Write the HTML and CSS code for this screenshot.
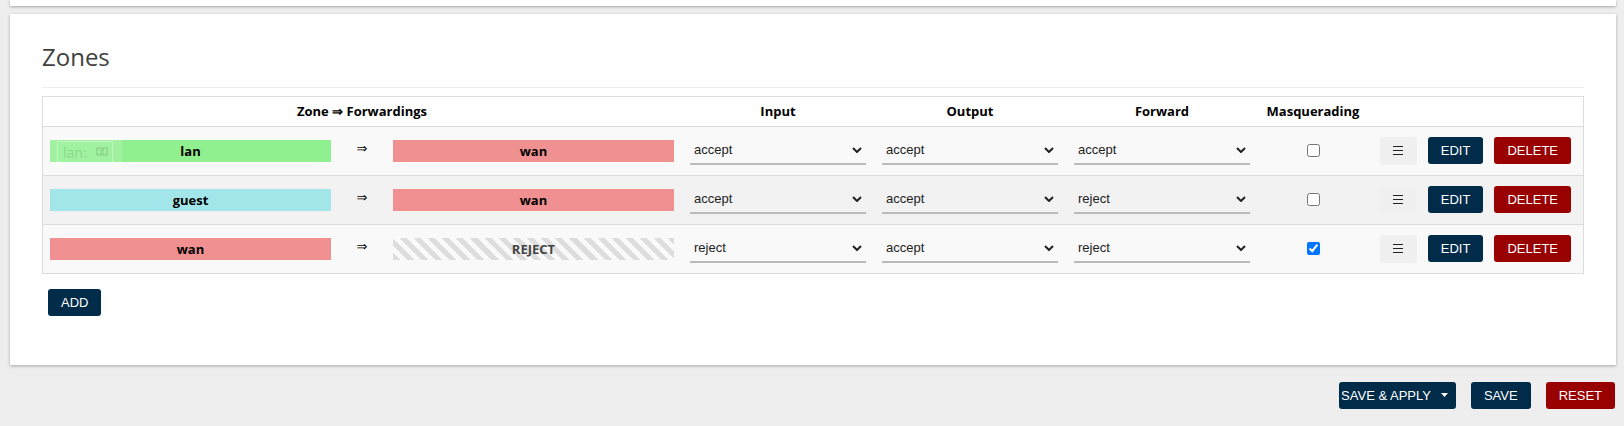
FILE: index.html
```html
<!DOCTYPE html>
<html lang="en">
<head>
	<meta charset="UTF-8">
	<title>Firewall - Zone Settings</title>
	<link rel="stylesheet" href="styles.css">
</head>
<body>
	<div class="card card-top"></div>

	<div class="card">
		<h3>Zones</h3>
		<div class="zones">
			<div class="row head">
				<div class="cell zone-cell">Zone &rArr; Forwardings</div>
				<div class="cell">Input</div>
				<div class="cell">Output</div>
				<div class="cell">Forward</div>
				<div class="cell">Masquerading</div>
				<div class="cell"></div>
			</div>

			<div class="row odd">
				<div class="cell zone-cell">
					<div class="fwd">
						<span class="badge lan">lan</span>
						<span class="arrow">&rArr;</span>
						<span class="badge wan">wan</span>
					</div>
					<div class="ghost">
						<div class="ghost-inner">
							lan:
							<svg width="14" height="14" viewBox="0 0 14 14">
								<path d="M2 3h4v3h2v-3h4v7h-4v-2h-2v2h-4z" fill="none" stroke="#333" stroke-width="1.2"/>
							</svg>
						</div>
					</div>
				</div>
				<div class="cell"><div class="select"><span>accept</span><svg class="chev" viewBox="0 0 10 6"><path d="M1 1l4 4 4-4"/></svg></div></div>
				<div class="cell"><div class="select"><span>accept</span><svg class="chev" viewBox="0 0 10 6"><path d="M1 1l4 4 4-4"/></svg></div></div>
				<div class="cell"><div class="select"><span>accept</span><svg class="chev" viewBox="0 0 10 6"><path d="M1 1l4 4 4-4"/></svg></div></div>
				<div class="cell"><input type="checkbox"></div>
				<div class="cell actions">
					<button class="btn btn-menu"><svg width="10" height="9" viewBox="0 0 10 9"><path d="M0 .5h10M0 4.5h10M0 8.5h10"/></svg></button>
					<button class="btn btn-edit">EDIT</button>
					<button class="btn btn-delete">DELETE</button>
				</div>
			</div>

			<div class="row even">
				<div class="cell zone-cell">
					<div class="fwd">
						<span class="badge guest">guest</span>
						<span class="arrow">&rArr;</span>
						<span class="badge wan">wan</span>
					</div>
				</div>
				<div class="cell"><div class="select"><span>accept</span><svg class="chev" viewBox="0 0 10 6"><path d="M1 1l4 4 4-4"/></svg></div></div>
				<div class="cell"><div class="select"><span>accept</span><svg class="chev" viewBox="0 0 10 6"><path d="M1 1l4 4 4-4"/></svg></div></div>
				<div class="cell"><div class="select"><span>reject</span><svg class="chev" viewBox="0 0 10 6"><path d="M1 1l4 4 4-4"/></svg></div></div>
				<div class="cell"><input type="checkbox"></div>
				<div class="cell actions">
					<button class="btn btn-menu"><svg width="10" height="9" viewBox="0 0 10 9"><path d="M0 .5h10M0 4.5h10M0 8.5h10"/></svg></button>
					<button class="btn btn-edit">EDIT</button>
					<button class="btn btn-delete">DELETE</button>
				</div>
			</div>

			<div class="row odd">
				<div class="cell zone-cell">
					<div class="fwd">
						<span class="badge wan">wan</span>
						<span class="arrow">&rArr;</span>
						<span class="badge reject">REJECT</span>
					</div>
				</div>
				<div class="cell"><div class="select"><span>reject</span><svg class="chev" viewBox="0 0 10 6"><path d="M1 1l4 4 4-4"/></svg></div></div>
				<div class="cell"><div class="select"><span>accept</span><svg class="chev" viewBox="0 0 10 6"><path d="M1 1l4 4 4-4"/></svg></div></div>
				<div class="cell"><div class="select"><span>reject</span><svg class="chev" viewBox="0 0 10 6"><path d="M1 1l4 4 4-4"/></svg></div></div>
				<div class="cell"><input type="checkbox" checked></div>
				<div class="cell actions">
					<button class="btn btn-menu"><svg width="10" height="9" viewBox="0 0 10 9"><path d="M0 .5h10M0 4.5h10M0 8.5h10"/></svg></button>
					<button class="btn btn-edit">EDIT</button>
					<button class="btn btn-delete">DELETE</button>
				</div>
			</div>
		</div>

		<button class="btn btn-edit btn-add">ADD</button>
	</div>

	<div class="page-actions">
		<button class="btn btn-edit btn-apply">SAVE &amp; APPLY <svg width="7" height="4" viewBox="0 0 7 4"><path d="M0 0h7l-3.5 4z" fill="#fff"/></svg></button>
		<button class="btn btn-edit">SAVE</button>
		<button class="btn btn-delete">RESET</button>
	</div>
</body>
</html>
```

FILE: styles.css
```css
body, h3 {
	margin: 0;
	padding: 0;
}

body {
	background-color: #EEE;
	padding: 0 8px 0 10px;
	font-family: "Open Sans", "Noto Sans", sans-serif;
	color: #000;
}

.card {
	background-color: #FFF;
	box-shadow: 0 1px 3px rgba(0, 0, 0, 0.3);
	padding: 29px 32px 49px;
}

.card-top {
	height: 6px;
	padding: 0;
	margin-bottom: 8px;
}

.card h3 {
	font-weight: normal;
	font-size: 24px;
	line-height: 28.8px;
	color: #404040;
	padding-bottom: 15px;
	border-bottom: 1px solid #EEE;
	margin-bottom: 8px;
}

/* 表格骨架 */
.zones {
	border: 1px solid #DDD;
}

.row {
	display: grid;
	grid-template-columns: 639px 192px 192px 192px 110px 1fr;
	height: 48px;
	border-top: 1px solid #DDD;
}

.row.head {
	height: 29px;
	border-top: 0;
	background-color: #FFF;
	font-weight: bold;
	font-size: 13px;
}

.row.odd {
	background-color: #F9F9F9;
}

.row.even {
	background-color: #F2F2F2;
}

.cell {
	display: flex;
	align-items: center;
	justify-content: center;
	padding: 0 8px;
}

.zone-cell {
	padding: 0 8px 0 7px;
	position: relative;
}

.fwd {
	display: grid;
	grid-template-columns: 281px 62px 281px;
	align-items: center;
	width: 100%;
}

.badge {
	height: 22px;
	line-height: 22px;
	text-align: center;
	font-weight: bold;
	font-size: 13px;
}

.lan { background-color: #90F090; }
.wan { background-color: #F09090; }
.guest { background-color: #A2E6EA; }

.reject {
	color: #444;
	background: repeating-linear-gradient(45deg, #DDD, #DDD 5px, #F9F9F9 5px, #F9F9F9 10px);
}

.arrow {
	text-align: center;
	font-family: "DejaVu Sans", sans-serif;
	font-size: 13px;
	padding-bottom: 5px;
}

/* 拖拽残影 */
.ghost {
	position: absolute;
	left: 7px;
	top: 8px;
	width: 72px;
	height: 35px;
	background-color: rgba(255, 255, 255, 0.15);
	border-radius: 3px;
}

.ghost-inner {
	margin: 6px 0 0 7px;
	width: 56px;
	height: 23px;
	border: 1px solid rgba(255, 255, 255, 0.35);
	color: rgba(0, 0, 0, 0.15);
	font-size: 14px;
	padding-left: 5px;
	box-sizing: border-box;
	display: flex;
	align-items: center;
	gap: 8px;
}

.ghost-inner svg {
	opacity: 0.2;
}

.select {
	width: 100%;
	height: 28px;
	box-sizing: border-box;
	border-bottom: 2px solid #BBB;
	display: flex;
	align-items: center;
	justify-content: space-between;
	padding: 0 4px;
	font-family: "Liberation Sans", Arial, sans-serif;
	font-size: 13px;
	color: #222;
}

.chev {
	width: 10px;
	height: 6px;
	fill: none;
	stroke: #222;
	stroke-width: 2;
}

input[type="checkbox"] {
	margin: 0;
	width: 13px;
	height: 13px;
}

.actions {
	justify-content: flex-end;
	padding-right: 12px;
	gap: 11px;
}

.btn {
	height: 27px;
	border: 0;
	border-radius: 3px;
	padding: 0 13px;
	font-family: "Liberation Sans", Arial, sans-serif;
	font-size: 13px;
	color: #FFF;
	cursor: pointer;
}

.btn-menu {
	width: 37px;
	height: 28px;
	padding: 0;
	background-color: #F0F0F0;
	display: flex;
	align-items: center;
	justify-content: center;
}

.btn-menu svg {
	stroke: #222;
	stroke-width: 1;
}

.btn-edit {
	background-color: #002B49;
}

.btn-delete {
	background-color: #990000;
}

.btn-add {
	display: block;
	margin: 15px 0 0 6px;
}

.page-actions {
	display: flex;
	justify-content: flex-end;
	gap: 15px;
	margin-top: 17px;
	padding-right: 1px;
}

.btn-apply {
	padding: 0 8px 0 2px;
	display: flex;
	align-items: center;
	gap: 10px;
}
```
